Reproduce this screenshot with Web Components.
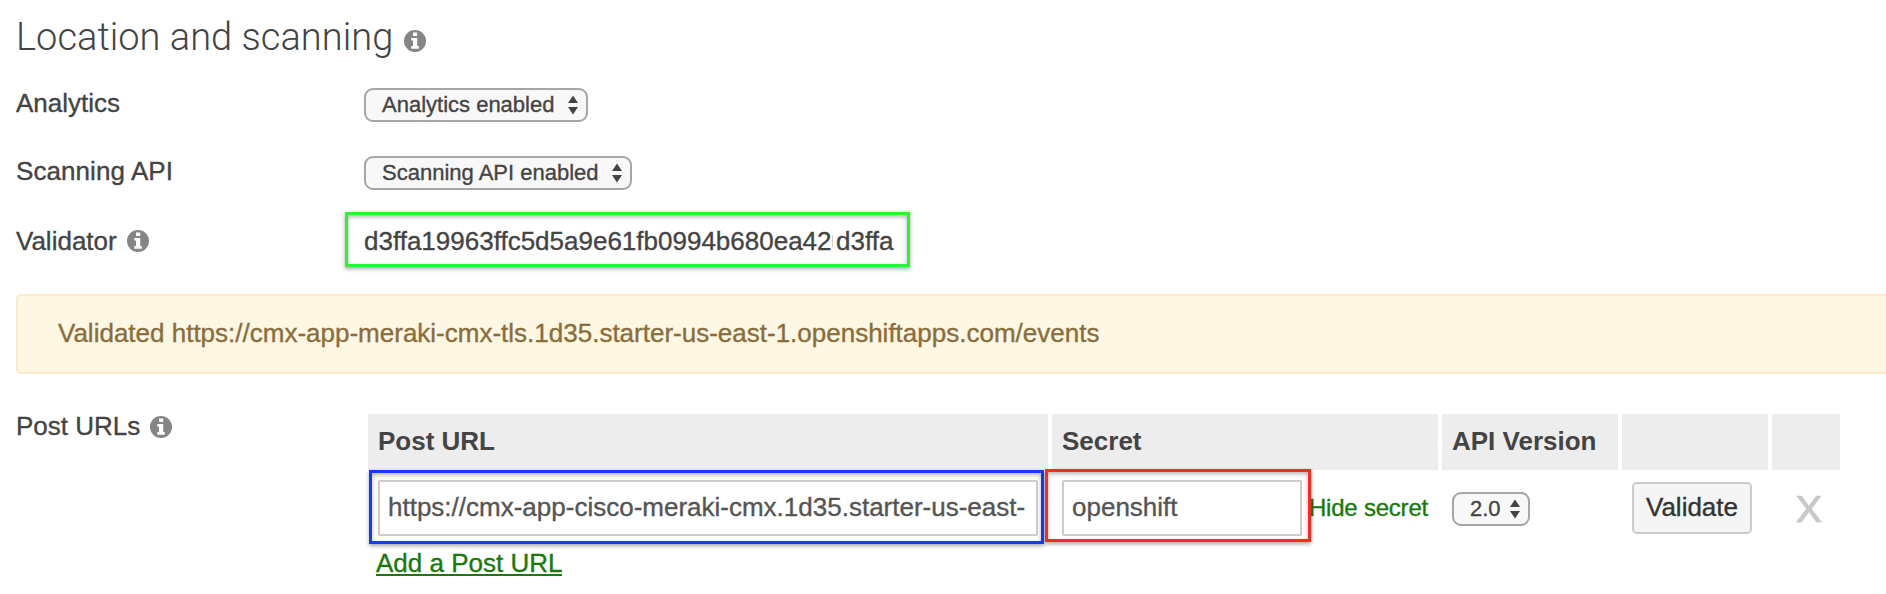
<!DOCTYPE html>
<html lang="en">
<head>
<meta charset="utf-8">
<title>Location and scanning</title>
<style>
html, body { margin: 0; background: #fff; }
body { width: 1886px; height: 594px; overflow: hidden; font-family: "Liberation Sans", Arial, sans-serif; font-size: 26px; color: #444; -webkit-text-stroke: .35px; }
</style>
</head>
<body>
<location-page></location-page>
<script>
const define = (name, html) => customElements.define(name, class extends HTMLElement {
  constructor() {
    super();
    const t = document.createElement('template');
    t.innerHTML = html;
    this.attachShadow({ mode: 'open' }).append(t.content.cloneNode(true));
  }
});

define('info-icon', `
<style>:host{display:block;width:22px;height:22px;flex:none} svg{display:block}</style>
<svg width="22" height="22" viewBox="0 0 22 22"><circle cx="11" cy="11" r="11" fill="#858585"/>
<path fill="#fff" d="M9 2.4h4.2v3.5H9zM7.3 7.9h5.9v8.2h1.6v2.6H7.3v-2.6H9v-5.6H7.3z"/></svg>`);

define('section-title', `
<style>:host{display:flex;height:70px;align-items:flex-start}
h1{margin:10px 0 0;font:300 38px/54px Roboto,sans-serif;color:#444;width:388px;white-space:nowrap;letter-spacing:.03px;-webkit-text-stroke:0}
info-icon{margin-top:30px}</style>
<h1><slot></slot></h1><info-icon></info-icon>`);

define('form-row', `
<style>:host{display:grid;grid-template-columns:348px 1fr;align-items:start}
.l{display:flex;gap:10px;line-height:30px;white-space:nowrap}
::slotted(info-icon){margin-top:5px}</style>
<div class="l"><span><slot name="label"></slot></span><slot name="icon"></slot></div><slot></slot>`);

define('select-box', `
<style>:host{display:flex;justify-content:space-between;box-sizing:border-box;height:34px;width:var(--w);padding:0 8px 0 16px;border:2px solid #a6a6a6;border-radius:9px;background:#f8f8f8;font-size:22px;line-height:29px;white-space:nowrap}
svg{display:block;margin-top:5px;flex:none}</style>
<span><slot></slot></span><svg width="10" height="20" viewBox="0 0 10 20"><path fill="#444" d="M5 .5 10 8H0zM0 12h10L5 19.5z"/></svg>`);

define('highlight-box', `
<style>:host{display:block;box-sizing:border-box;border:3px solid var(--c);box-shadow:0 2px 4px rgba(0,0,0,.35),inset 0 2px 4px rgba(0,0,0,.3);pointer-events:none}</style><slot></slot>`);

define('validator-value', `
<style>:host{display:block}
highlight-box{--c:#2bf52e;width:565px;height:55px;margin-left:-19px;padding:11px 0 0 16px;line-height:30px;white-space:nowrap;display:flex}
.a{width:468px}
.edge{width:1px;height:12px;margin:9px 3px 0 0;background:#d9cfc6}</style>
<highlight-box><div class="a"><slot name="head"></slot></div><i class="edge"></i><slot name="tail"></slot></highlight-box>`);

define('alert-banner', `
<style>:host{display:block;box-sizing:border-box;width:1900px;height:80px;border:2px solid #fbeacb;border-radius:5px;background:#fef7e3;color:#8a6d3b;padding:22px 0 0 40px;line-height:30px;white-space:nowrap}</style><slot></slot>`);

define('text-field', `
<style>:host{display:block;box-sizing:border-box;width:var(--w);height:56px;border:2px solid #ccc;border-radius:2px;background:#fff;color:#555;padding:10px 8px 0;line-height:30px}
div{overflow:hidden;white-space:nowrap;width:var(--tw,auto)}</style><div><slot></slot></div>`);

define('remove-button', `
<style>:host{display:block}svg{display:block}</style>
<svg width="28" height="28" viewBox="0 0 28 28"><path fill="#c8c8c8" d="M1.2 .8h5.6L14 10.4 21.2 .8h5.4L16.8 13.8 27 27.4h-5.6L14 17.2 6.4 27.4H.8L11.2 13.8z"/></svg>`);

define('url-table', `
<style>
:host{display:block;width:1472px;margin:3px 0 0 4px}
.g{display:grid;grid-template-columns:680px 386px 176px 146px 68px;column-gap:4px}
.h{height:56px;background:#ededed;font-weight:bold;line-height:30px;padding:12px 0 0 10px;box-sizing:border-box;white-space:nowrap;-webkit-text-stroke:0}
.c{height:76px;position:relative;padding:10px 0 0 10px;box-sizing:border-box;display:flex;align-items:flex-start}
.blue{--c:#103cff;position:absolute;left:1px;top:0;width:675px;height:74px}
.red{--c:#ff2a1c;position:absolute;left:-7px;top:-1px;width:266px;height:73px}
.hide{margin:14px 0 0 7px;font-size:24px;letter-spacing:-.22px;line-height:28px;color:#1a7a0a;white-space:nowrap}
button{box-sizing:border-box;width:120px;height:52px;margin:2px 0 0;padding:0 0 3px;border:2px solid #ccc;border-radius:5px;background:#f5f5f5;font:26px/30px "Liberation Sans",Arial,sans-serif;color:#333}
.add{display:block;margin:2px 0 0 8px;line-height:30px;width:max-content;color:#1a7a0a;border-bottom:2px solid #1a7a0a;text-decoration:none;height:26px}
</style>
<div class="g">
<div class="h">Post URL</div><div class="h">Secret</div><div class="h">API Version</div><div class="h"></div><div class="h"></div>
<div class="c"><text-field style="--w:660px;--tw:639px">https://cmx-app-cisco-meraki-cmx.1d35.starter-us-east-</text-field><highlight-box class="blue"></highlight-box></div>
<div class="c"><text-field style="--w:240px">openshift</text-field><span class="hide">Hide secret</span><highlight-box class="red"></highlight-box></div>
<div class="c"><select-box style="--w:78px;margin-top:12px">2.0</select-box></div>
<div class="c"><button>Validate</button></div>
<div class="c"><remove-button style="margin:15px 0 0 13px"></remove-button></div>
</div>
<a class="add">Add a Post URL</a>`);

define('location-page', `
<style>:host{display:block;padding-left:16px}
form-row{height:var(--h)}</style>
<section-title>Location and scanning</section-title>
<form-row style="padding-top:18px;box-sizing:border-box;height:86px"><span slot="label">Analytics</span><select-box style="--w:224px">Analytics enabled</select-box></form-row>
<form-row style="--h:56px"><span slot="label" style="letter-spacing:.08px">Scanning API</span><select-box style="--w:268px">Scanning API enabled</select-box></form-row>
<form-row style="--h:82px"><span slot="label" style="position:relative;top:14px">Validator</span><info-icon slot="icon" style="margin-top:18px"></info-icon><validator-value><span slot="head">d3ffa19963ffc5d5a9e61fb0994b680ea42</span><span slot="tail">d3ffa</span></validator-value></form-row>
<alert-banner>Validated https://cmx-app-meraki-cmx-tls.1d35.starter-us-east-1.openshiftapps.com/events</alert-banner>
<form-row style="margin-top:37px"><span slot="label">Post URLs</span><info-icon slot="icon"></info-icon><url-table></url-table></form-row>`);
</script>
</body>
</html>
